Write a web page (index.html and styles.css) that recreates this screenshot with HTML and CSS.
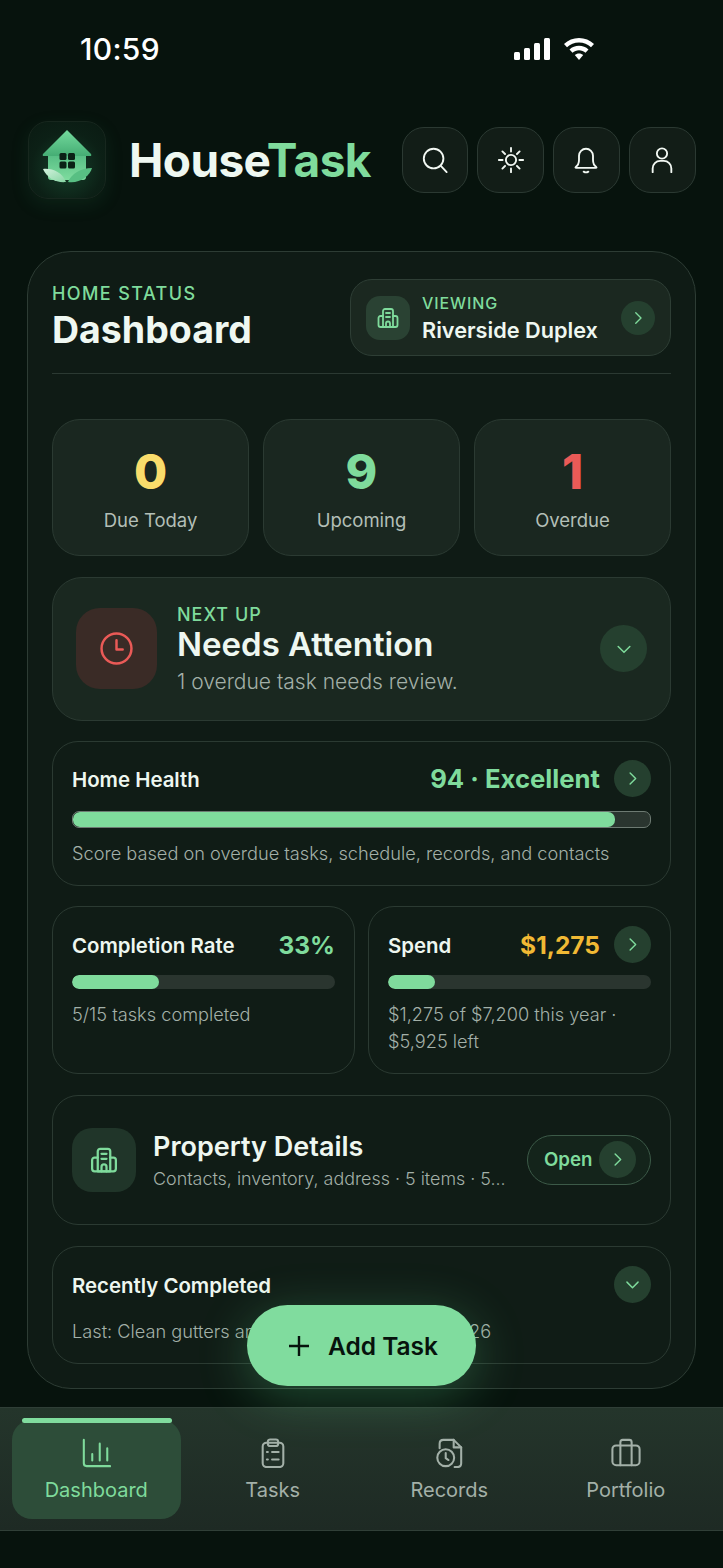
FILE: index.html
```html
<!DOCTYPE html>
<html lang="en">
  <head>
    <meta charset="UTF-8" />
    <title>HouseTask</title>
    <link rel="stylesheet" href="styles.css">
  </head>
  <body>
    <svg class="sprite" width="0" height="0">
      <symbol id="i-right" viewBox="0 0 24 24"><path d="M9 5l7 7-7 7" /></symbol>
      <symbol id="i-down" viewBox="0 0 24 24"><path d="M5 9l7 7 7-7" /></symbol>
      <symbol id="i-building" viewBox="0 0 24 24">
        <path d="M7 21V5a2 2 0 0 1 2-2h6a2 2 0 0 1 2 2v16z" />
        <path d="M7 10H4.500a2 2 0 0 0-2 2v7a2 2 0 0 0 2 2H19.500a2 2 0 0 0 2-2v-7a2 2 0 0 0-2-2H17" />
        <path d="M10 7h4M10 11h4M10 21v-3.500a2 2 0 0 1 4 0V21" />
      </symbol>
    </svg>

    <div class="status">
      <span class="time">10:59</span>
      <div class="status-icons">
        <svg width="38" height="24" viewBox="0 0 38 24" fill="#fff">
          <rect x="1" y="15" width="6" height="8" rx="1.500" />
          <rect x="11" y="11" width="6" height="12" rx="1.500" />
          <rect x="21" y="6" width="6" height="17" rx="1.500" />
          <rect x="31" y="1" width="6" height="22" rx="1.500" />
        </svg>
        <svg width="34" height="24" viewBox="0 0 32 24" fill="#fff">
          <path d="M16 1c5.700 0 11 2.200 15 6l-3 3.200C24.800 7.200 20.600 5.400 16 5.400S7.200 7.200 4 10.200L1 7c4-3.800 9.300-6 15-6z" />
          <path d="M16 8.800c3.600 0 6.900 1.300 9.500 3.700l-3 3.200c-1.800-1.600-4-2.500-6.500-2.500s-4.700.9-6.500 2.500l-3-3.200c2.600-2.400 5.900-3.700 9.500-3.700z" />
          <path d="M16 16.400c1.600 0 3.100.6 4.200 1.600L16 23l-4.200-5c1.100-1 2.600-1.600 4.200-1.600z" />
        </svg>
      </div>
    </div>

    <header class="topbar">
      <div class="logo">
        <svg width="54" height="62" viewBox="0 0 54 62">
          <defs>
            <linearGradient id="roof" x1="0" y1="0" x2="0" y2="1">
              <stop offset="0" stop-color="#74da9d" />
              <stop offset="1" stop-color="#45ad74" />
            </linearGradient>
            <linearGradient id="wall" x1="0" y1="0" x2="0" y2="1">
              <stop offset="0" stop-color="#4fb87f" />
              <stop offset="1" stop-color="#7fdc9f" />
            </linearGradient>
            <linearGradient id="leaf" x1="0" y1="0" x2="1" y2="1">
              <stop offset="0" stop-color="#d3f2dd" />
              <stop offset="1" stop-color="#86d5a3" />
            </linearGradient>
          </defs>
          <path d="M8 22h38v26q0 3-3 3H11q-3 0-3-3z" fill="url(#wall)" />
          <path d="M27 1L51 25q1 2-1 2H4q-2 0-1-2z" fill="url(#roof)" />
          <g fill="#0b2016">
            <rect x="19.500" y="24" width="7" height="7" rx="1.500" />
            <rect x="28" y="24" width="7" height="7" rx="1.500" />
            <rect x="19.500" y="32.500" width="7" height="7" rx="1.500" />
            <rect x="28" y="32.500" width="7" height="7" rx="1.500" />
          </g>
          <path d="M3 40c9-1 19 3 23 13C16 54 7 49 3 40z" fill="url(#leaf)" />
          <path d="M52 39c-2 8-13 16-24 14 3-8 13-14 24-14z" fill="#58bf83" />
        </svg>
      </div>
      <h1 class="brand">House<span class="brand-accent">Task</span></h1>
      <div class="top-actions">
        <button class="icon-btn">
          <svg viewBox="0 0 30 30"><circle cx="13.500" cy="13.500" r="10.500" /><path d="M21.500 21.500l6 6.500" /></svg>
        </button>
        <button class="icon-btn">
          <svg viewBox="0 0 30 30"><circle cx="15" cy="15" r="5.500" /><path d="M15 2v4M15 24v4M2 15h4M24 15h4M5.800 5.800l2.800 2.800M21.400 21.400l2.800 2.800M5.800 24.200l2.800-2.800M21.400 8.600l2.800-2.800" /></svg>
        </button>
        <button class="icon-btn">
          <svg viewBox="0 0 30 30"><path d="M4 22.500c2.800-2 3.500-4 3.500-7.500V10.500a7.500 7.500 0 0 1 15 0V15c0 3.500.7 5.500 3.500 7.500q.8 1-.5 1H4.500q-1.300 0-.5-1z" /><path d="M12.500 27.500q2.500 1.500 5 0" /></svg>
        </button>
        <button class="icon-btn">
          <svg viewBox="0 0 30 30"><circle cx="15" cy="8" r="5.500" /><path d="M5 28v-4a8 8 0 0 1 8-8h4a8 8 0 0 1 8 8v4" /></svg>
        </button>
      </div>
    </header>

    <main class="panel">
      <section class="panel-head">
        <div>
          <div class="eyebrow">HOME STATUS</div>
          <h2 class="page-title">Dashboard</h2>
        </div>
        <div class="viewing">
          <span class="tile-sm"><svg class="line green"><use href="#i-building" /></svg></span>
          <div class="viewing-text">
            <div class="viewing-label">VIEWING</div>
            <div class="viewing-name">Riverside Duplex</div>
          </div>
          <span class="round round-34"><svg class="line green"><use href="#i-right" /></svg></span>
        </div>
      </section>

      <section class="stats">
        <div class="stat"><div class="stat-num yellow">0</div><div class="stat-label">Due Today</div></div>
        <div class="stat"><div class="stat-num green-text">9</div><div class="stat-label">Upcoming</div></div>
        <div class="stat"><div class="stat-num red">1</div><div class="stat-label">Overdue</div></div>
      </section>

      <section class="next-up">
        <span class="alert-tile">
          <svg viewBox="0 0 32 32"><circle cx="16" cy="16" r="14.500" /><path d="M16 8v9h6" /></svg>
        </span>
        <div class="next-text">
          <div class="next-label">NEXT UP</div>
          <div class="next-title">Needs Attention</div>
          <div class="next-sub">1 overdue task needs review.</div>
        </div>
        <span class="round round-47"><svg class="line green"><use href="#i-down" /></svg></span>
      </section>

      <section class="card health">
        <div class="row">
          <span class="metric-label">Home Health</span>
          <span class="row-end">
            <span class="health-value">94 · Excellent</span>
            <span class="round round-37"><svg class="line green"><use href="#i-right" /></svg></span>
          </span>
        </div>
        <div class="bar bar-outlined"><div class="fill" style="width: 94%"></div></div>
        <p class="note">Score based on overdue tasks, schedule, records, and contacts</p>
      </section>

      <section class="two-up">
        <div class="card metric">
          <div class="row row-37">
            <span class="metric-label">Completion Rate</span>
            <span class="metric-value green-text">33%</span>
          </div>
          <div class="bar"><div class="fill" style="width: 33%"></div></div>
          <p class="note">5/15 tasks completed</p>
        </div>
        <div class="card metric">
          <div class="row row-37">
            <span class="metric-label">Spend</span>
            <span class="row-end">
              <span class="metric-value amber">$1,275</span>
              <span class="round round-37"><svg class="line green"><use href="#i-right" /></svg></span>
            </span>
          </div>
          <div class="bar"><div class="fill" style="width: 18%"></div></div>
          <p class="note">$1,275 of $7,200 this year · $5,925 left</p>
        </div>
      </section>

      <section class="card property">
        <span class="tile-lg"><svg class="line green"><use href="#i-building" /></svg></span>
        <div class="property-text">
          <div class="property-title">Property Details</div>
          <div class="property-sub">Contacts, inventory, address · 5 items · 5...</div>
        </div>
        <button class="open-btn">
          Open
          <span class="round round-37"><svg class="line green"><use href="#i-right" /></svg></span>
        </button>
      </section>

      <section class="card recent">
        <div class="row">
          <span class="metric-label">Recently Completed</span>
          <span class="round round-37"><svg class="line green"><use href="#i-down" /></svg></span>
        </div>
        <p class="note recent-note">Last: Clean gutters and downspouts · Apr 2, 2026</p>
      </section>
    </main>

    <button class="fab">
      <svg viewBox="2 2 20 20"><path d="M12 2v20M2 12h20" /></svg>
      Add Task
    </button>

    <nav class="tabbar">
      <a class="tab tab-active">
        <svg viewBox="0 0 32 32"><path d="M3 2v25q0 3 3 3h25M12 24v-7M20 24V6M28 24V11" /></svg>
        Dashboard
      </a>
      <a class="tab">
        <svg viewBox="0 0 32 32"><rect x="5" y="5" width="22" height="26" rx="4" /><rect x="10.500" y="1.500" width="11" height="7" rx="2.500" /><path d="M9.500 15h1M15 15h7M9.500 23h1M15 23h7" /></svg>
        Tasks
      </a>
      <a class="tab">
        <svg viewBox="0 0 32 32"><path d="M6 11V6q0-4 4-4h11l8 8v17q0 4-4 4h-3" /><path d="M21 2v8h8" /><circle cx="12.500" cy="21" r="9" /><path d="M12.500 16v5.500l3 2" /></svg>
        Records
      </a>
      <a class="tab">
        <svg viewBox="0 0 32 32"><rect x="1.500" y="8" width="29" height="21" rx="4" /><path d="M10 29V4.500q0-2.500 2.500-2.500h7Q22 2 22 4.500V29" /></svg>
        Portfolio
      </a>
    </nav>
  </body>
</html>
```

FILE: styles.css
```css
* {
  box-sizing: border-box;
}

html,
body {
  height: 100%;
}

body {
  position: relative;
  margin: 0;
  height: 1568px;
  overflow: hidden;
  background: #07130d;
  color: #eef7f0;
  font-family: "Inter", "Liberation Sans", sans-serif;
}

h1,
h2,
p {
  margin: 0;
}

button {
  font-family: inherit;
  cursor: pointer;
}

.sprite {
  position: absolute;
}

.line {
  fill: none;
  stroke-width: 1.8;
  stroke-linecap: round;
  stroke-linejoin: round;
}

.green {
  stroke: #7fdb9c;
}

.green-text {
  color: #7fdb9c;
}

.yellow {
  color: #f9dc6b;
}

.red {
  color: #ea5a57;
}

.amber {
  color: #f1b934;
}

/* status bar */
.status {
  display: flex;
  justify-content: space-between;
  align-items: center;
  height: 98px;
  padding: 0 127px 0 80px;
}

.time {
  font-size: 30px;
  font-weight: 500;
  letter-spacing: 0.3px;
  color: #fff;
}

.status-icons {
  display: flex;
  align-items: center;
  gap: 11px;
}

/* top */
.topbar {
  display: flex;
  align-items: center;
  height: 78px;
  margin: 23px 27.500px 0 28px;
}

.logo {
  display: flex;
  align-items: center;
  justify-content: center;
  width: 78px;
  height: 78px;
  border: 1px solid #17271e;
  border-radius: 20px;
  background: radial-gradient(circle at 50% 60%, #15402a 0%, #0c2016 60%, #0a1a12 100%);
  box-shadow: 0 6px 18px rgba(38, 120, 72, 0.16);
}

.brand {
  margin-left: 23px;
  font-size: 46px;
  font-weight: 700;
  letter-spacing: -0.6px;
  color: #eef8f1;
}

.brand-accent {
  color: #7fdb9c;
}

.top-actions {
  display: flex;
  gap: 9.330px;
  margin-left: auto;
}

.icon-btn {
  display: flex;
  align-items: center;
  justify-content: center;
  width: 66.500px;
  height: 66.500px;
  padding: 0;
  border: 1.5px solid #2b3932;
  border-radius: 22px;
  background: #121d17;
}

.icon-btn svg {
  width: 28px;
  height: 28px;
  fill: none;
  stroke: #f2f8f3;
  stroke-width: 2;
  stroke-linecap: round;
  stroke-linejoin: round;
}

/* main panel */
.panel {
  display: flex;
  flex-direction: column;
  gap: 20.500px;
  width: 669px;
  height: 1137.500px;
  margin: 52px 0 0 27px;
  padding: 27px 24px 0;
  border: 1.5px solid #2d3c34;
  border-radius: 44px;
  background: #0f1b15;
}

.panel-head {
  display: flex;
  justify-content: space-between;
  align-items: flex-start;
  height: 95px;
  margin-bottom: 24.500px;
  border-bottom: 1.5px solid #2b3932;
}

.eyebrow {
  margin-top: 4px;
  font-size: 18px;
  font-weight: 500;
  line-height: 22px;
  letter-spacing: 1.4px;
  color: #7fdb9c;
}

.page-title {
  margin-top: 3px;
  font-size: 37.500px;
  font-weight: 700;
  line-height: 44px;
  color: #eff8f2;
}

.viewing {
  display: flex;
  align-items: center;
  width: 321px;
  height: 77px;
  padding: 0 15px;
  border: 1.5px solid #2e3e35;
  border-radius: 22px;
  background: #1b2820;
}

.tile-sm {
  display: flex;
  align-items: center;
  justify-content: center;
  flex: none;
  width: 44px;
  height: 44px;
  border-radius: 14px;
  background: #2a4233;
}

.tile-sm svg {
  width: 24px;
  height: 24px;
}

.viewing-text {
  flex: 1;
  margin-left: 12px;
  padding-top: 2px;
}

.viewing-label {
  font-size: 16px;
  font-weight: 500;
  line-height: 22px;
  letter-spacing: 0.9px;
  color: #7fdb9c;
}

.viewing-name {
  margin-top: 2px;
  font-size: 21.700px;
  font-weight: 600;
  line-height: 29px;
  color: #eef7f0;
}

.round {
  display: flex;
  align-items: center;
  justify-content: center;
  flex: none;
  border-radius: 50%;
  background: #25402f;
}

.round-34 {
  width: 34px;
  height: 34px;
}

.round-34 svg {
  width: 18px;
  height: 18px;
}

.round-37 {
  width: 37px;
  height: 37px;
}

.round-37 svg {
  width: 19px;
  height: 19px;
}

.round-47 {
  width: 47px;
  height: 47px;
}

.round-47 svg {
  width: 20px;
  height: 20px;
}

/* stats */
.stats {
  display: grid;
  grid-template-columns: repeat(3, 1fr);
  gap: 14px;
}

.stat {
  height: 137px;
  padding-top: 25px;
  border: 1.5px solid #2b3a32;
  border-radius: 28px;
  background: #1a2720;
  text-align: center;
}

.stat-num {
  font-size: 48px;
  font-weight: 800;
  line-height: 54px;
}

.stat-label {
  margin-top: 9px;
  font-size: 18.500px;
  line-height: 24px;
  color: #b3bfb7;
}

/* next up */
.next-up {
  display: flex;
  align-items: center;
  height: 144px;
  padding: 0 23px;
  border: 1.5px solid #2b3a32;
  border-radius: 30px;
  background: #1a2820;
}

.alert-tile {
  display: flex;
  align-items: center;
  justify-content: center;
  flex: none;
  width: 81px;
  height: 81px;
  border-radius: 24px;
  background: #3a2b26;
}

.alert-tile svg {
  width: 33px;
  height: 33px;
  fill: none;
  stroke: #ea5a57;
  stroke-width: 2.4;
  stroke-linecap: round;
  stroke-linejoin: round;
}

.next-text {
  flex: 1;
  margin-left: 20px;
  padding-top: 4px;
}

.next-label {
  font-size: 18px;
  font-weight: 500;
  line-height: 22px;
  letter-spacing: 1px;
  color: #7fdb9c;
}

.next-title {
  font-size: 33px;
  font-weight: 600;
  line-height: 36px;
  color: #eef7f0;
}

.next-sub {
  margin-top: 5px;
  font-size: 21px;
  font-weight: 300;
  line-height: 30px;
  color: #a3b0a8;
}

/* cards */
.card {
  border: 1.5px solid #2b3a32;
  border-radius: 26px;
  background: #101c16;
}

.row {
  display: flex;
  align-items: center;
  justify-content: space-between;
}

.row-37 {
  min-height: 37px;
}

.row-end {
  display: flex;
  align-items: center;
  gap: 14px;
}

.metric-label {
  padding-top: 2px;
  font-size: 20.400px;
  font-weight: 600;
  color: #eef7f0;
}

.metric-value {
  font-size: 24.500px;
  font-weight: 700;
}

.note {
  font-size: 18.200px;
  font-weight: 300;
  line-height: 27px;
  color: #a3b0a8;
}

.bar {
  overflow: hidden;
  height: 14px;
  margin: 12px 0;
  border-radius: 7px;
  background: #2a352f;
}

.bar-outlined {
  height: 17px;
  margin-top: 14px;
  border: 1.5px solid #6d7a72;
}

.fill {
  height: 100%;
  border-radius: 7px;
  background: #7fdb9c;
}

.health {
  height: 144.500px;
  padding: 18px 19px 0;
}

.health-value {
  font-size: 25.700px;
  font-weight: 700;
  color: #7fdb9c;
}

.two-up {
  display: grid;
  grid-template-columns: 303px 303px;
  gap: 13px;
}

.metric {
  height: 168px;
  padding: 19px 19px 0;
}

/* property */
.property {
  display: flex;
  align-items: center;
  height: 130px;
  margin-bottom: 0.500px;
  padding: 0 19px;
}

.tile-lg {
  display: flex;
  align-items: center;
  justify-content: center;
  flex: none;
  width: 64px;
  height: 64px;
  border-radius: 20px;
  background: #203529;
}

.tile-lg svg {
  width: 30px;
  height: 30px;
}

.property-text {
  flex: 1;
  min-width: 0;
  margin-left: 17px;
  padding-top: 4px;
}

.property-title {
  font-size: 27px;
  font-weight: 600;
  line-height: 32px;
  color: #eef7f0;
}

.property-sub {
  margin-top: 2px;
  font-size: 17.900px;
  font-weight: 300;
  line-height: 28px;
  white-space: nowrap;
  color: #a3b0a8;
}

.open-btn {
  display: flex;
  align-items: center;
  gap: 6px;
  flex: none;
  width: 124px;
  height: 50px;
  padding: 0 15px 0 16px;
  border: 1.5px solid #3c5a48;
  border-radius: 25px;
  background: #14241b;
  font-size: 18.700px;
  font-weight: 600;
  color: #7fdb9c;
}

/* recent */
.recent {
  height: 118px;
  padding: 19px 19px 0;
}

.recent-note {
  margin-top: 15px;
}

/* add task */
.fab {
  position: absolute;
  top: 1305px;
  left: 247px;
  display: flex;
  align-items: center;
  justify-content: center;
  gap: 19px;
  width: 229px;
  height: 81px;
  padding: 0 0 0 4px;
  border: none;
  border-radius: 41px;
  background: #80dc9e;
  box-shadow: 0 10px 50px rgba(90, 200, 130, 0.32);
  font-size: 24.500px;
  font-weight: 600;
  color: #07130d;
}

.fab svg {
  width: 20px;
  height: 20px;
  fill: none;
  stroke: #07130d;
  stroke-width: 2.4;
  stroke-linecap: round;
}

/* tab bar */
.tabbar {
  display: grid;
  grid-template-columns: repeat(4, 176.500px);
  align-items: start;
  height: 124px;
  margin-top: 18.500px;
  padding: 12px 8px 0;
  border-top: 1.5px solid #303f37;
  border-bottom: 1.5px solid #303f37;
  background: linear-gradient(180deg, #24352b 0%, #1e2a24 100%);
}

.tab {
  position: relative;
  display: flex;
  flex-direction: column;
  align-items: center;
  gap: 8px;
  height: 99px;
  margin: 0 4px;
  padding-top: 18px;
  font-size: 20px;
  line-height: 28px;
  color: #a3b0a8;
}

.tab svg {
  width: 30px;
  height: 30px;
  fill: none;
  stroke: #a3b0a8;
  stroke-width: 2.2;
  stroke-linecap: round;
  stroke-linejoin: round;
}

.tab-active {
  border-radius: 20px;
  background: #2d4d39;
  color: #7fdb9c;
}

.tab-active svg {
  stroke: #7fdb9c;
}

.tab-active::before {
  content: "";
  position: absolute;
  top: -2px;
  left: 10px;
  right: 9px;
  height: 5px;
  border-radius: 3px;
  background: #80dc9e;
}
```
